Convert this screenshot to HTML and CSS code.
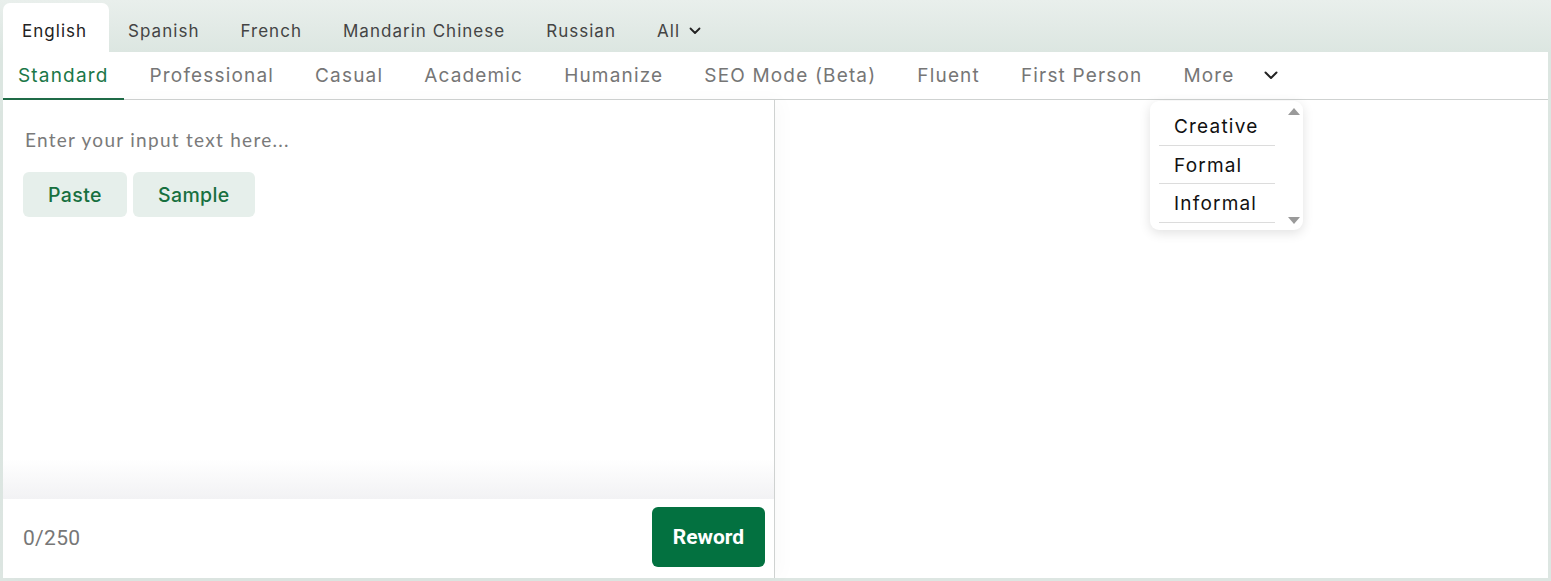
FILE: index.html
```html
<!DOCTYPE html>
<html lang="en">
<head>
<meta charset="utf-8">
<title>Paraphraser</title>
<link rel="stylesheet" href="styles.css">
</head>
<body>
<div class="lang-bar">
  <div class="lang-tab active">English</div>
  <div class="lang-tab">Spanish</div>
  <div class="lang-tab">French</div>
  <div class="lang-tab">Mandarin Chinese</div>
  <div class="lang-tab">Russian</div>
  <div class="lang-tab">All <svg class="chev-sm" viewBox="0 0 12 8" width="12" height="8"><path d="M1.5 1.5 L6 6 L10.5 1.5" fill="none" stroke="#222" stroke-width="1.8" stroke-linecap="round" stroke-linejoin="round"/></svg></div>
</div>
<div class="panel">
  <div class="mode-bar">
    <div class="mode-tab active">Standard</div>
    <div class="mode-tab">Professional</div>
    <div class="mode-tab">Casual</div>
    <div class="mode-tab">Academic</div>
    <div class="mode-tab">Humanize</div>
    <div class="mode-tab">SEO Mode (Beta)</div>
    <div class="mode-tab">Fluent</div>
    <div class="mode-tab">First Person</div>
    <div class="mode-tab">More</div>
    <div class="mode-chev"><svg viewBox="0 0 14 9" width="14" height="9"><path d="M1.5 1.5 L7 7 L12.5 1.5" fill="none" stroke="#222" stroke-width="2" stroke-linecap="round" stroke-linejoin="round"/></svg></div>
  </div>
  <div class="panes">
    <div class="left">
      <div class="input-area">
        <div class="placeholder">Enter your input text here...</div>
        <div class="btn-row">
          <button class="soft-btn">Paste</button>
          <button class="soft-btn">Sample</button>
        </div>
      </div>
      <div class="fade"></div>
      <div class="footer">
        <span class="count">0/250</span>
        <button class="reword">Reword</button>
      </div>
    </div>
    <div class="right"></div>
  </div>
  <div class="dropdown">
    <ul class="dd-list">
      <li>Creative</li>
      <li>Formal</li>
      <li>Informal</li>
    </ul>
    <div class="dd-scroll">
      <span class="arrow up"></span>
      <span class="arrow down"></span>
    </div>
  </div>
</div>
</body>
</html>
```

FILE: styles.css
```css
* { box-sizing: border-box; }
html, body { margin: 0; padding: 0; }
body {
  width: 1551px;
  height: 581px;
  overflow: hidden;
  background: linear-gradient(to bottom, #e9efec 0px, #dce6e1 52px, #dde6e2 100%);
  font-family: Inter, "Noto Sans", sans-serif;
}
.lang-bar {
  height: 52px;
  padding-left: 3px;
  display: flex;
  align-items: flex-end;
}
.lang-tab {
  height: 49px;
  padding: 6px 22px 0 19px;
  display: flex;
  align-items: center;
  gap: 9px;
  font-size: 17px;
  color: #444;
  letter-spacing: 1.02px;
}
.lang-tab.active {
  background: #fff;
  color: #222;
  border-radius: 7px 7px 0 0;
}
.chev-sm { margin-top: 1px; }
.panel {
  position: relative;
  margin: 0 3px;
  height: 526px;
  background: #fff;
  display: flex;
  flex-direction: column;
}
.mode-bar {
  height: 48px;
  border-bottom: 1px solid #cfd2d1;
  display: flex;
  align-items: stretch;
  gap: 11px;
}
.mode-tab {
  padding: 0 15px;
  display: flex;
  align-items: center;
  font-size: 19px;
  color: #767676;
  letter-spacing: 1.17px;
  margin-bottom: -1px;
  border-bottom: 2px solid transparent;
}
.mode-tab.active {
  color: #1b7748;
  border-bottom-color: #1f6b47;
}
.mode-chev {
  display: flex;
  align-items: center;
  padding-left: 3px;
}
.panes {
  flex: 1;
  display: flex;
  min-height: 0;
}
.left {
  width: 772px;
  border-right: 1px solid #cfd2d1;
  display: flex;
  flex-direction: column;
  box-shadow: 6px 0 18px rgba(0, 0, 0, 0.025);
}
.input-area {
  flex: 1;
  padding: 28px 20px 0;
}
.placeholder {
  font-family: Lato, "Open Sans", sans-serif;
  font-size: 19px;
  color: #7a7a7a;
  letter-spacing: 1.28px;
  padding-left: 2px;
  line-height: 24px;
}
.btn-row {
  margin-top: 20px;
  display: flex;
  gap: 6px;
}
.soft-btn {
  height: 45px;
  border: none;
  border-radius: 6px;
  background: #e6efeb;
  color: #17703f;
  font-family: Inter, sans-serif;
  font-size: 19.5px;
  font-weight: 500;
  letter-spacing: 0.4px;
  padding: 0 25px;
}
.fade {
  height: 40px;
  background: linear-gradient(to bottom, rgba(242, 242, 244, 0), #f2f2f4);
}
.footer {
  height: 79px;
  display: flex;
  align-items: center;
  justify-content: space-between;
  padding: 0 9px 0 20px;
}
.count {
  font-family: Roboto, sans-serif;
  font-size: 21px;
  color: #777;
  letter-spacing: 0.3px;
  margin-top: -2px;
}
.reword {
  width: 113px;
  height: 60px;
  border: none;
  border-radius: 6px;
  background: #037140;
  color: #fff;
  font-family: Roboto, "Liberation Sans", sans-serif;
  font-weight: 700;
  font-size: 21px;
  margin-top: -3px;
}
.right { flex: 1; }
.dropdown {
  position: absolute;
  left: 1147px;
  top: 49px;
  width: 153px;
  height: 129px;
  background: #fff;
  border-radius: 9px;
  box-shadow: 0 3px 12px rgba(0, 0, 0, 0.12);
  display: flex;
}
.dd-list {
  list-style: none;
  margin: 6px 0 0 9px;
  padding: 0;
  width: 116px;
}
.dd-list li {
  height: 38.5px;
  padding: 2px 0 0 15px;
  display: flex;
  align-items: center;
  font-family: Inter, sans-serif;
  font-size: 19px;
  color: #111;
  letter-spacing: 1.2px;
  border-bottom: 1px solid #dcdcdc;
}
.dd-scroll {
  flex: 1;
  position: relative;
}
.arrow {
  position: absolute;
  left: 13px;
  width: 0;
  height: 0;
  border-left: 6px solid transparent;
  border-right: 6px solid transparent;
}
.arrow.up { top: 7px; border-bottom: 7px solid #9a9a9a; }
.arrow.down { top: 116px; border-top: 7px solid #9a9a9a; }
```
